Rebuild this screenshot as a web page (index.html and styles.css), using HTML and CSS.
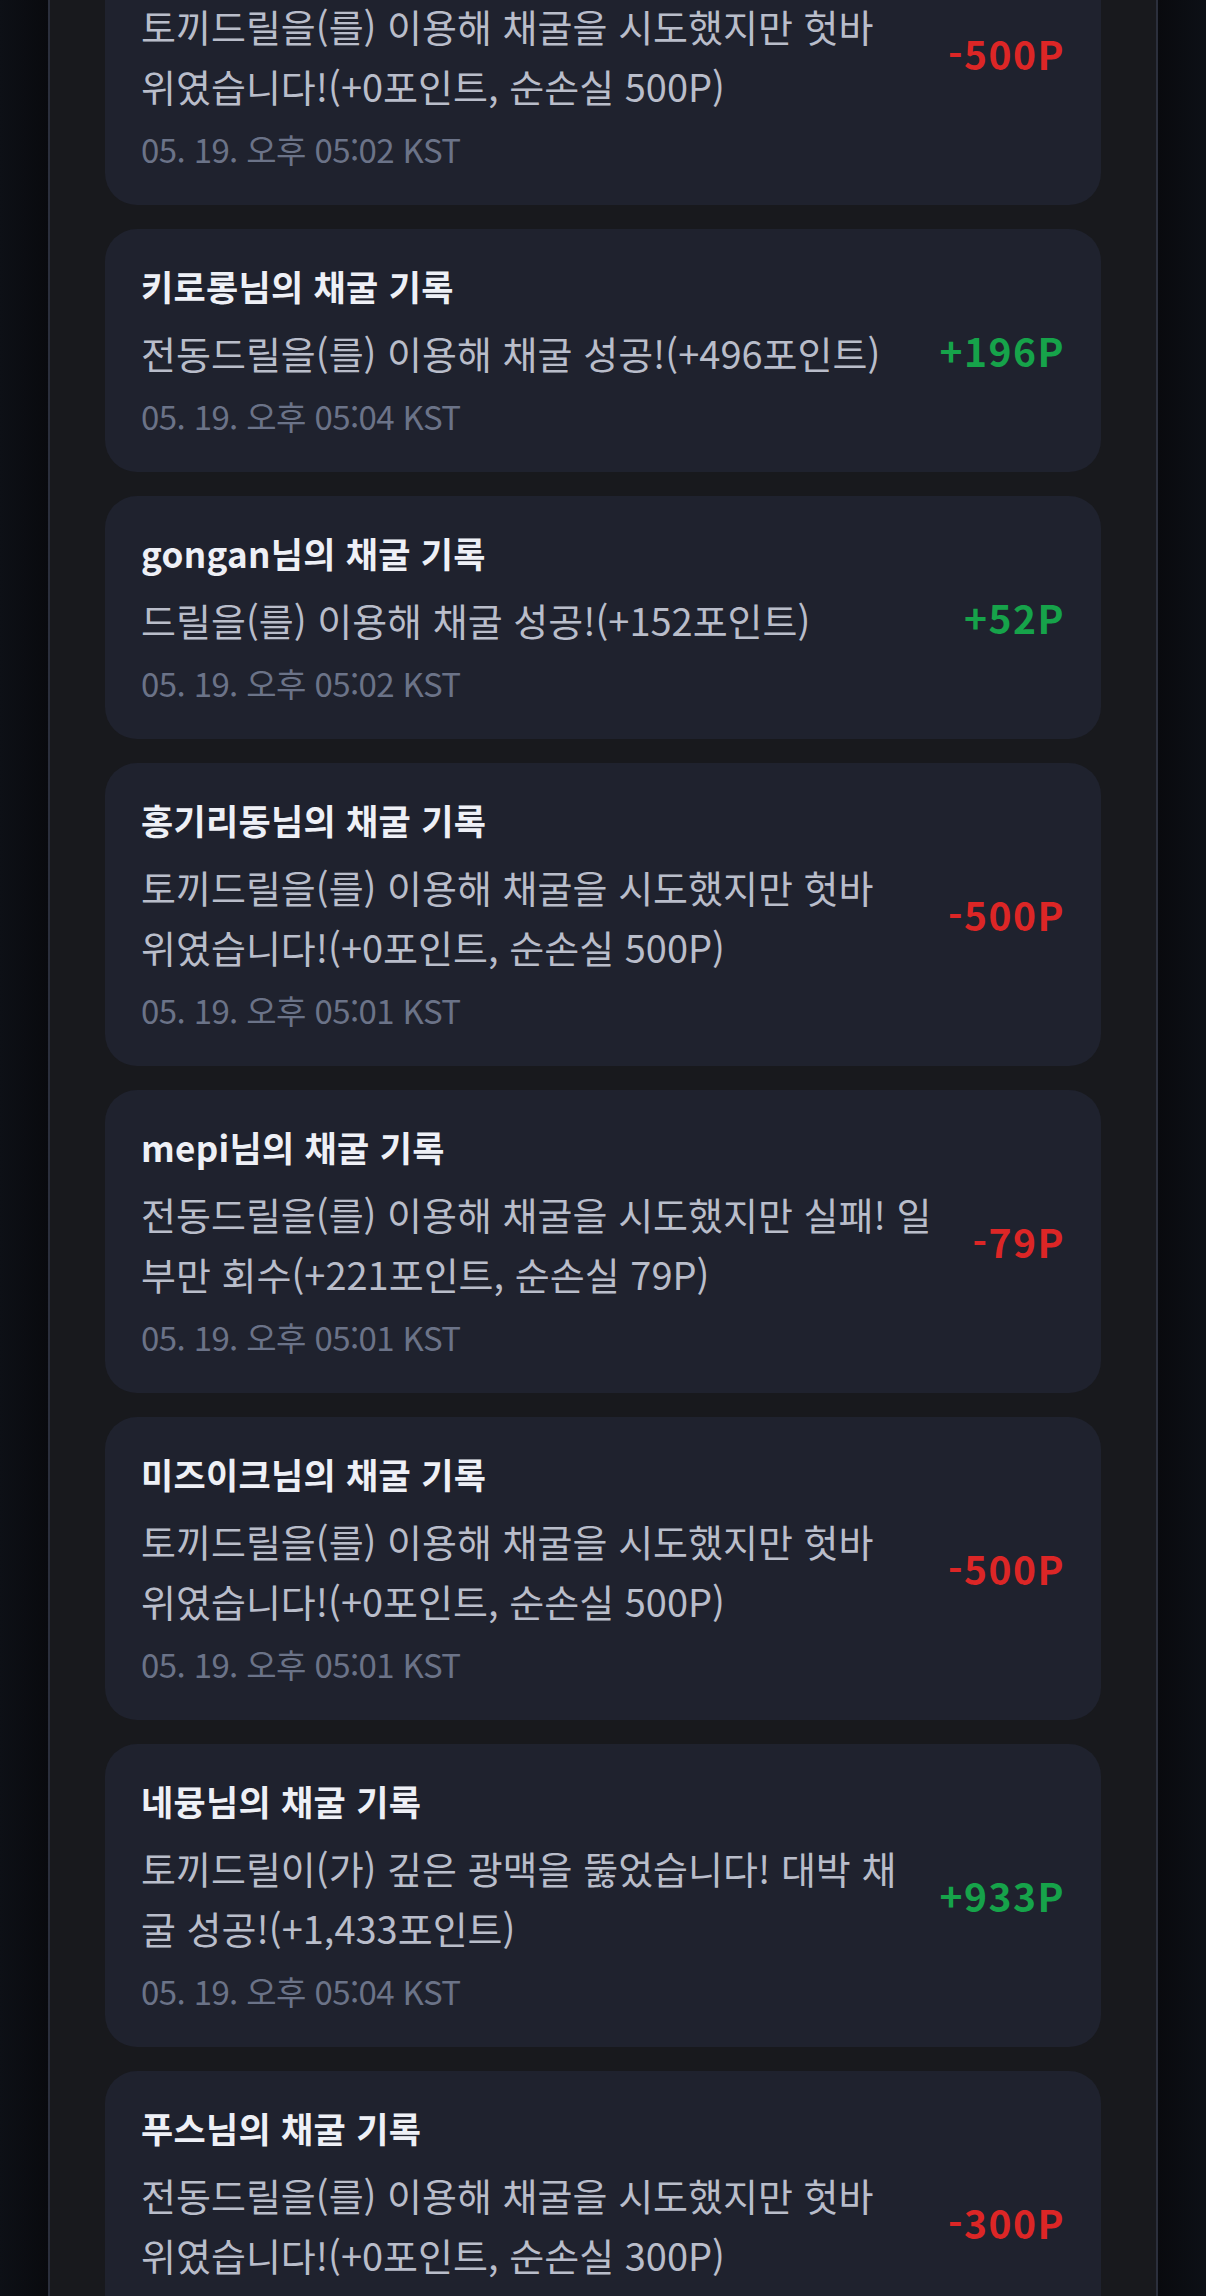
FILE: index.html
```html
<!DOCTYPE html>
<html lang="ko">
<head>
  <meta charset="UTF-8" />
  <meta name="viewport" content="width=device-width, initial-scale=1.0"/>
  <title>채굴 기록</title>
  <link rel="stylesheet" href="styles.css">
</head>
<body>
  <main class="panel">
    <div class="feed">

      <div class="record">
        <div class="record-text">
          <p class="record-title">토끼님의 채굴 기록</p>
          <p class="record-desc">토끼드릴을(를) 이용해 채굴을 시도했지만 헛바위였습니다!(+0포인트, 순손실 500P)</p>
          <p class="record-time">05. 19. 오후 05:02 KST</p>
        </div>
        <div class="record-amount loss">-500P</div>
      </div>

      <div class="record">
        <div class="record-text">
          <p class="record-title">키로롱님의 채굴 기록</p>
          <p class="record-desc">전동드릴을(를) 이용해 채굴 성공!(+496포인트)</p>
          <p class="record-time">05. 19. 오후 05:04 KST</p>
        </div>
        <div class="record-amount gain">+196P</div>
      </div>

      <div class="record">
        <div class="record-text">
          <p class="record-title">gongan님의 채굴 기록</p>
          <p class="record-desc">드릴을(를) 이용해 채굴 성공!(+152포인트)</p>
          <p class="record-time">05. 19. 오후 05:02 KST</p>
        </div>
        <div class="record-amount gain">+52P</div>
      </div>

      <div class="record">
        <div class="record-text">
          <p class="record-title">홍기리동님의 채굴 기록</p>
          <p class="record-desc">토끼드릴을(를) 이용해 채굴을 시도했지만 헛바위였습니다!(+0포인트, 순손실 500P)</p>
          <p class="record-time">05. 19. 오후 05:01 KST</p>
        </div>
        <div class="record-amount loss">-500P</div>
      </div>

      <div class="record">
        <div class="record-text">
          <p class="record-title">mepi님의 채굴 기록</p>
          <p class="record-desc">전동드릴을(를) 이용해 채굴을 시도했지만 실패! 일부만 회수(+221포인트, 순손실 79P)</p>
          <p class="record-time">05. 19. 오후 05:01 KST</p>
        </div>
        <div class="record-amount loss">-79P</div>
      </div>

      <div class="record">
        <div class="record-text">
          <p class="record-title">미즈이크님의 채굴 기록</p>
          <p class="record-desc">토끼드릴을(를) 이용해 채굴을 시도했지만 헛바위였습니다!(+0포인트, 순손실 500P)</p>
          <p class="record-time">05. 19. 오후 05:01 KST</p>
        </div>
        <div class="record-amount loss">-500P</div>
      </div>

      <div class="record">
        <div class="record-text">
          <p class="record-title">네뮹님의 채굴 기록</p>
          <p class="record-desc">토끼드릴이(가) 깊은 광맥을 뚫었습니다! 대박 채굴 성공!(+1,433포인트)</p>
          <p class="record-time">05. 19. 오후 05:04 KST</p>
        </div>
        <div class="record-amount gain">+933P</div>
      </div>

      <div class="record">
        <div class="record-text">
          <p class="record-title">푸스님의 채굴 기록</p>
          <p class="record-desc">전동드릴을(를) 이용해 채굴을 시도했지만 헛바위였습니다!(+0포인트, 순손실 300P)</p>
          <p class="record-time">05. 19. 오후 05:00 KST</p>
        </div>
        <div class="record-amount loss">-300P</div>
      </div>

    </div>
  </main>
</body>
</html>
```

FILE: styles.css
```css
* {
  margin: 0;
  padding: 0;
  box-sizing: border-box;
}

html, body {
  height: 100%;
  overflow: hidden;
}

body {
  font-family: "Noto Sans CJK KR", "Noto Sans", sans-serif;
  background: linear-gradient(90deg, #0d1016 0%, #090a0e 4%, #090a0e 96%, #0d1016 100%);
  color: #eef0f6;
}

.panel {
  margin: 0 48px;
  height: 100%;
  padding: 0 55px;
  background-color: #18191d;
  border-left: 2px solid #2b2f3c;
  border-right: 2px solid #2b2f3c;
  overflow: hidden;
}

.feed {
  display: flex;
  flex-direction: column;
  gap: 24px;
  margin-top: -98px;
}

.record {
  display: flex;
  align-items: center;
  gap: 40.3px;
  padding: 31px 36px 33px;
  background-color: #1f222e;
  border-radius: 32px;
}

.record-text {
  flex: 1;
  min-width: 0;
}

.record-title {
  font-size: 35px;
  font-weight: 700;
  line-height: 52px;
  letter-spacing: 0.3px;
  color: #eef0f6;
}

.record-desc {
  margin-top: 11px;
  font-size: 38px;
  line-height: 60px;
  color: #b9bdca;
}

.record-time {
  margin-top: 10px;
  font-size: 33px;
  line-height: 46px;
  letter-spacing: -0.6px;
  color: #6b7388;
}

.record-amount {
  flex-shrink: 0;
  font-size: 39px;
  font-weight: 700;
  line-height: 52px;
  letter-spacing: 1.5px;
}

.loss {
  color: #dc2626;
}

.gain {
  color: #16a34a;
}
```
